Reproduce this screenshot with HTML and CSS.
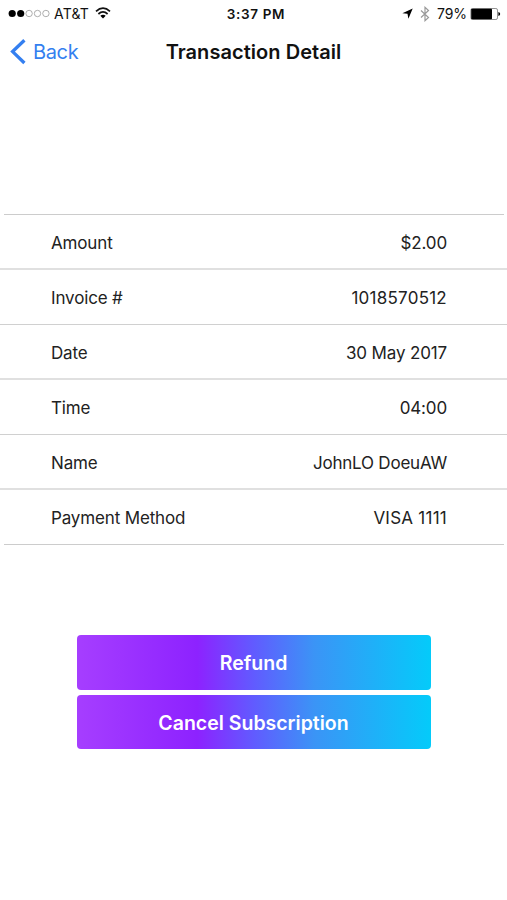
FILE: index.html
```html
<!DOCTYPE html>
<html lang="en">
<head>
<meta charset="utf-8">
<title>Transaction Detail</title>
<link rel="stylesheet" href="styles.css">
</head>
<body>
<header class="status">
  <div class="status-left">
    <svg class="signal" width="42" height="9" viewBox="0 0 42 9">
      <circle cx="4.2" cy="4.5" r="3.6"/><circle cx="12.7" cy="4.5" r="3.6"/>
      <g fill="none" stroke="#999" stroke-width=".8"><circle cx="21.1" cy="4.5" r="3.2"/><circle cx="29.5" cy="4.5" r="3.2"/><circle cx="37.9" cy="4.5" r="3.2"/></g>
    </svg>
    <span class="carrier">AT&amp;T</span>
    <svg class="wifi" width="16" height="12" viewBox="0 0 16 12">
      <g fill="none" stroke="#111" stroke-width="1.7"><path d="M1 4.3Q8-2.1 15 4.3"/><path d="M3.4 7Q8 2.8 12.6 7"/></g>
      <path d="M5.3 8.8Q8 6.5 10.7 8.8L8 11.5Z"/>
    </svg>
  </div>
  <span class="clock">3:37 PM</span>
  <div class="status-right">
    <svg class="location" width="11" height="11" viewBox="0 0 11 11"><path d="M10.7.5 6.4 10.7 5.5 5.8.4 5.2Z"/></svg>
    <svg class="bluetooth" width="10" height="16" viewBox="0 0 10 16"><path d="M1 4.5 8.5 11.5 5 14.7V1.3L8.5 4.5 1 11.5" fill="none" stroke="#999" stroke-width="1.2"/></svg>
    <span class="percent">79%</span>
    <svg class="battery" width="31" height="12" viewBox="0 0 31 12">
      <rect x=".9" y=".5" width="26.6" height="11" rx="1.6" fill="#fff" stroke="#777" stroke-width=".8"/>
      <rect x="1.2" y=".8" width="20.8" height="10.4" rx=".8"/><path d="M28.4 4Q30.2 4.5 30.2 6T28.4 8Z"/>
    </svg>
  </div>
</header>
<nav class="nav">
  <a class="back"><svg width="16" height="26" viewBox="0 0 16 26"><path d="M14.4 1.2 2.6 12.6 14.4 24" fill="none" stroke="#347ff0" stroke-width="3.3"/></svg><span>Back</span></a>
  <h1 class="title">Transaction Detail</h1>
</nav>
<main>
  <dl class="details">
    <div class="row heavy"><dt>Amount</dt><dd>$2.00</dd></div>
    <div class="row"><dt>Invoice #</dt><dd class="wide">1018570512</dd></div>
    <div class="row heavy"><dt>Date</dt><dd>30 May 2017</dd></div>
    <div class="row"><dt>Time</dt><dd>04:00</dd></div>
    <div class="row heavy"><dt>Name</dt><dd class="narrow">JohnLO DoeuAW</dd></div>
    <div class="row last"><dt>Payment Method</dt><dd class="wide">VISA 1111</dd></div>
  </dl>
  <div class="actions">
    <button class="action">Refund</button>
    <button class="action">Cancel Subscription</button>
  </div>
</main>
</body>
</html>
```
FILE: styles.css
```css
* { box-sizing: border-box; }
body {
  margin: 0;
  min-height: 900px;
  background: #fff;
  color: #222;
  font-family: Inter, "Liberation Sans", sans-serif;
}
svg { display: block; flex: none; }
.status {
  display: grid;
  grid-template-columns: 1fr auto 1fr;
  align-items: center;
  height: 27px;
  padding: 0 6px 0 8px;
  font-size: 14px;
  color: #111;
}
.status-left, .status-right { display: flex; align-items: center; }
.status-right { justify-content: flex-end; }
.carrier { margin-left: 4px; letter-spacing: .2px; }
.wifi { margin: 0 0 2px 6px; }
.clock { padding-left: 3px; font-size: 13.5px; font-weight: 600; letter-spacing: .65px; }
.bluetooth { margin: 0 7px 0 7px; }
.percent { margin-right: 3px; letter-spacing: -.1px; }
.nav {
  display: grid;
  grid-template-columns: 1fr auto 1fr;
  align-items: center;
  height: 49px;
  padding-left: 10px;
}
.back { display: flex; align-items: center; gap: 7px; font-size: 20px; letter-spacing: -.35px; color: #347ff0; }
.title { margin: 0 10px 0 0; font-size: 20px; font-weight: 600; letter-spacing: .05px; color: #111; }
.details { margin: 138px 0 0; }
.details::before { content: ""; display: block; height: 1px; margin: 0 3px 0 4px; background: #ccc; }
.row {
  display: flex;
  justify-content: space-between;
  align-items: center;
  height: 55px;
  padding: 1px 60px 0 51px;
  border-bottom: 1px solid #d0d0d0;
  font-size: 17px;
  letter-spacing: -.15px;
}
.heavy { padding-top: 2px; border-bottom: 2px solid #e0e0e0; }
.last { margin: 0 3px 0 4px; padding: 1px 57px 0 47px; border-color: #ccc; }
dt, dd { margin: 0; white-space: nowrap; }
.wide { letter-spacing: .25px; }
.narrow { letter-spacing: -.22px; }
.actions { display: grid; gap: 5px; margin: 90px 76px 0 77px; }
.action {
  height: 54.5px;
  padding: 2px 1px 0 0;
  border: 0;
  border-radius: 4px;
  background: linear-gradient(90deg, #a63eff 0%, #8d22ff 34%, #615bff 50%, #3b94f6 67%, #04cbfa 100%);
  color: #fff;
  font: 600 19.5px Inter, "Liberation Sans", sans-serif;
}
```
